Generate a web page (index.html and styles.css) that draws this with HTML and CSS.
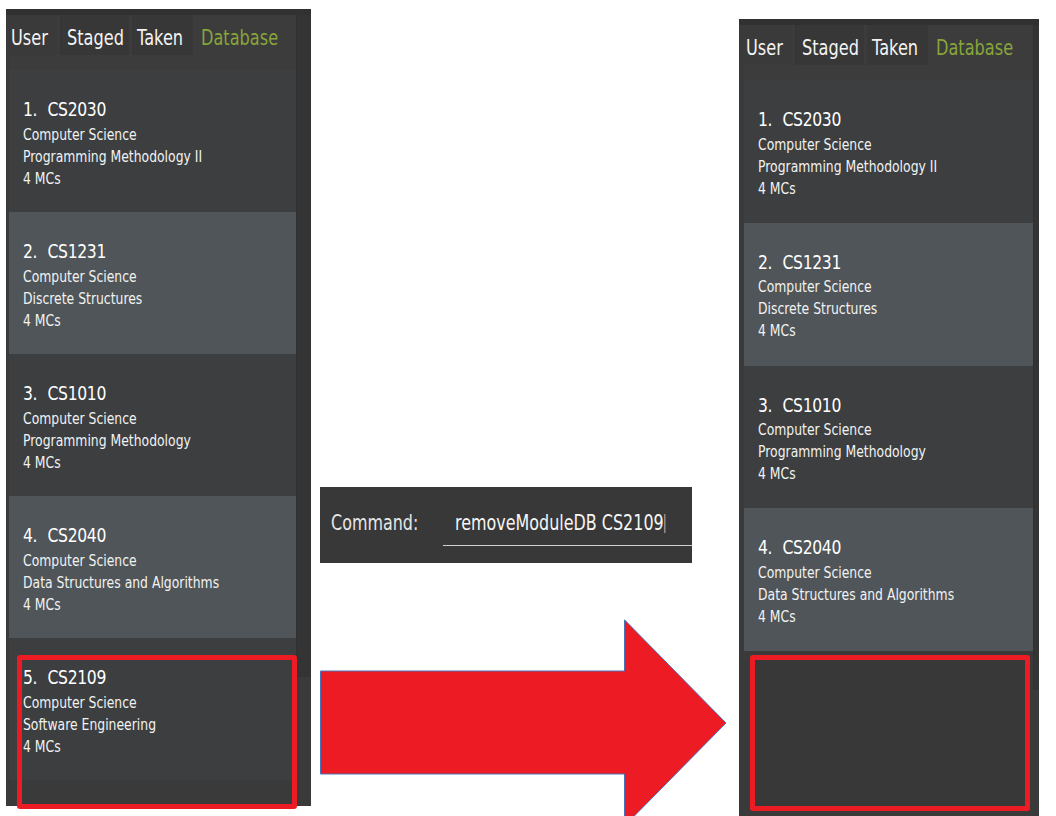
FILE: index.html
```html
<!DOCTYPE html>
<html lang="en">
<head>
<meta charset="utf-8">
<title>removeModuleDB</title>
<link rel="stylesheet" href="styles.css">
</head>
<body>
<div class="page">
  <section class="panel panel-left">
    <div class="panel-main">
      <nav class="tabs">
        <div class="tab tab-user"><span>User</span></div>
        <div class="tab tab-staged"><span>Staged</span></div>
        <div class="tab tab-taken"><span>Taken</span></div>
        <div class="tab tab-db active"><span>Database</span></div>
      </nav>
      <div class="list">
        <div class="card"><div class="card-text"><div class="title"><span class="idx">1.</span> CS2030</div><div class="line">Computer Science</div><div class="line">Programming Methodology II</div><div class="line">4 MCs</div></div></div>
        <div class="card"><div class="card-text"><div class="title"><span class="idx">2.</span> CS1231</div><div class="line">Computer Science</div><div class="line">Discrete Structures</div><div class="line">4 MCs</div></div></div>
        <div class="card"><div class="card-text"><div class="title"><span class="idx">3.</span> CS1010</div><div class="line">Computer Science</div><div class="line">Programming Methodology</div><div class="line">4 MCs</div></div></div>
        <div class="card"><div class="card-text"><div class="title"><span class="idx">4.</span> CS2040</div><div class="line">Computer Science</div><div class="line">Data Structures and Algorithms</div><div class="line">4 MCs</div></div></div>
        <div class="card"><div class="card-text"><div class="title"><span class="idx">5.</span> CS2109</div><div class="line">Computer Science</div><div class="line">Software Engineering</div><div class="line">4 MCs</div></div></div>
      </div>
    </div>
    <div class="strip"><div class="track"></div></div>
    <div class="highlight"></div>
  </section>

  <div class="middle">
    <div class="command">
      <div class="cmd-label"><span>Command:</span></div>
      <div class="cmd-input"><span>removeModuleDB CS2109<i class="caret"></i></span></div>
    </div>
    <svg class="arrow" width="420" height="197" viewBox="0 0 420 197" xmlns="http://www.w3.org/2000/svg">
      <polygon points="0.5,52 304.5,52 304.5,0.8 406,104 304.5,207 304.5,155 0.5,155" fill="#ed1c24" stroke="#4a72b8" stroke-width="1"/>
    </svg>
  </div>

  <section class="panel panel-right">
    <div class="panel-main">
      <nav class="tabs">
        <div class="tab tab-user"><span>User</span></div>
        <div class="tab tab-staged"><span>Staged</span></div>
        <div class="tab tab-taken"><span>Taken</span></div>
        <div class="tab tab-db active"><span>Database</span></div>
      </nav>
      <div class="list">
        <div class="card"><div class="card-text"><div class="title"><span class="idx">1.</span> CS2030</div><div class="line">Computer Science</div><div class="line">Programming Methodology II</div><div class="line">4 MCs</div></div></div>
        <div class="card"><div class="card-text"><div class="title"><span class="idx">2.</span> CS1231</div><div class="line">Computer Science</div><div class="line">Discrete Structures</div><div class="line">4 MCs</div></div></div>
        <div class="card"><div class="card-text"><div class="title"><span class="idx">3.</span> CS1010</div><div class="line">Computer Science</div><div class="line">Programming Methodology</div><div class="line">4 MCs</div></div></div>
        <div class="card"><div class="card-text"><div class="title"><span class="idx">4.</span> CS2040</div><div class="line">Computer Science</div><div class="line">Data Structures and Algorithms</div><div class="line">4 MCs</div></div></div>
      </div>
    </div>
    <div class="strip"><div class="track"></div></div>
    <div class="highlight"></div>
  </section>
</div>
</body>
</html>
```

FILE: styles.css
```css
html, body {
  margin: 0;
  padding: 0;
  background: #ffffff;
}

body {
  font-family: "DejaVu Sans", "Liberation Sans", sans-serif;
  width: 1056px;
  height: 816px;
  overflow: hidden;
}

.page {
  display: flex;
  align-items: flex-start;
  height: 816px;
}

/* ---------- panels ---------- */
.panel {
  position: relative;
  display: flex;
  box-sizing: border-box;
  height: 797px;
  background: #3a3a3a;
  border-top: 6px solid #313131;
}

.panel-left {
  width: 305px;
  margin: 9px 0 0 6px;
  padding-left: 3px;
}

.panel-right {
  width: 300px;
  margin-top: 19px;
  padding-left: 5px;
}

.panel-left .panel-main { width: 287px; }
.panel-right .panel-main { width: 289px; }

.strip {
  flex: 1;
}

.track {
  background: #343434;
  border-left: 1px solid #313131;
  box-sizing: border-box;
}

.panel-left .track { height: 662px; }
.panel-right .track { height: 665px; }

/* ---------- tabs ---------- */
.tabs {
  display: flex;
  gap: 3px;
  height: 55px;
  background: #3c3c3c;
}

.tab {
  box-sizing: border-box;
  height: 40px;
  padding-top: 3px;
  font-size: 21px;
  line-height: 40px;
  color: #f4f4f4;
  white-space: nowrap;
}

.tab span {
  display: inline-block;
  transform: scaleX(0.77);
  transform-origin: left center;
}

.tab-user { width: 48px; padding-left: 2px; background: #3a3a3a; }
.tab-staged { width: 69px; padding-left: 6px; background: #373737; border-left: 1px solid #343434; }
.tab-taken { width: 61px; padding-left: 5px; background: #373737; }
.tab-db { width: 90px; padding-left: 5px; }

.tab.active { color: #87a53b; }

/* ---------- cards ---------- */
.card {
  box-sizing: border-box;
  height: 142px;
  padding: 26px 0 0 14px;
  background: #3c3e40;
  color: #f2f2f2;
}

.panel-right .card { height: 142.75px; }

.card:nth-child(even) {
  background: #4f5558;
}

.card-text {
  transform: scaleX(0.8);
  transform-origin: left top;
  white-space: nowrap;
}

.title {
  font-size: 19.5px;
  line-height: 27.5px;
  letter-spacing: -0.4px;
  color: #ffffff;
}

.idx {
  margin-right: 7px;
}

.line {
  font-size: 15.5px;
  line-height: 22px;
}

/* ---------- highlight boxes ---------- */
.highlight {
  position: absolute;
  left: 11px;
  width: 280px;
  box-sizing: border-box;
  border: 5px solid #ed1c24;
  border-radius: 3px;
}

.panel-left .highlight { top: 640px; height: 154px; }
.panel-right .highlight { top: 630px; height: 156px; background: #383838; }

/* ---------- middle: command + arrow ---------- */
.middle {
  width: 428px;
  flex-shrink: 0;
  display: flex;
  flex-direction: column;
}

.command {
  display: flex;
  align-items: flex-start;
  box-sizing: border-box;
  width: 372px;
  height: 76px;
  margin: 487px 0 0 9px;
  padding-left: 11px;
  background: #383838;
  font-size: 22px;
  white-space: nowrap;
}

.command span {
  display: inline-block;
  transform: scaleX(0.725);
  transform-origin: left center;
}

.cmd-label {
  flex: 0 0 112px;
  min-width: 0;
  margin-top: 23px;
  line-height: 26px;
  color: #e6e6e6;
}

.cmd-input {
  flex: 1 1 0;
  min-width: 0;
  box-sizing: border-box;
  height: 41px;
  margin-top: 18px;
  padding: 5px 0 0 12px;
  line-height: 26px;
  color: #f6f6f6;
  border-bottom: 1.5px solid #cfcfcf;
}

.caret {
  display: inline-block;
  width: 1.5px;
  height: 19px;
  margin-left: 1px;
  vertical-align: -3px;
  background: #e8e8e8;
}

.arrow {
  display: block;
  margin: 56px 0 0 9px;
}
```
